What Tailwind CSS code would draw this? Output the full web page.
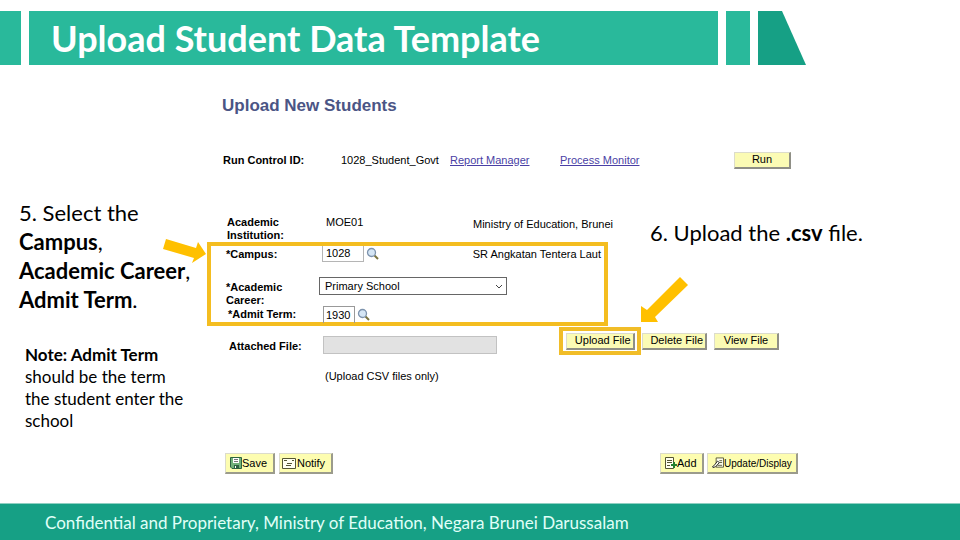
<!DOCTYPE html>
<html lang="en">
<head>
    <meta charset="UTF-8">
    <meta name="viewport" content="width=device-width, initial-scale=1.0">
    <title>Upload Student Data Template</title>
    <script src="https://cdn.jsdelivr.net/npm/@tailwindcss/browser@4"></script>
</head>
<body class="min-h-screen flex flex-col bg-white text-black font-['Liberation_Sans',sans-serif] text-[11px]">
    <header class="flex gap-2 pt-[11px] mr-[16%]">
        <div class="w-[21px] bg-[#29b99b]"></div>
        <div class="flex-1 h-[54px] bg-[#29b99b] flex items-center pl-[22px]">
            <h1 class="font-['Lato',sans-serif] text-[36px] leading-[54px] font-bold text-white whitespace-nowrap">Upload Student Data Template</h1>
        </div>
        <div class="w-6 bg-[#29b99b]"></div>
        <svg class="w-12 h-[54px]" viewBox="0 0 48 54"><path d="M0 0H24L48 54H0Z" fill="#16a085"/></svg>
    </header>

    <main class="flex-1 flex">
        <!-- instructions -->
        <aside class="w-[207px] shrink-0 pl-[19px] pt-[133px] font-['Lato',sans-serif]">
            <p class="relative text-[22px] leading-[29px] whitespace-nowrap">
                5. Select the<br><b>Campus</b>,<br><b>Academic Career</b>,<br><b>Admit Term</b>.
                <svg class="absolute left-36 top-10 w-[44px] h-[26px]" viewBox="0 0 44 26"><path d="M3 1L33 10L35 4L43 16L29 25L31 20L0 11Z" fill="#ffc000"/></svg>
            </p>
            <p class="mt-[30px] pl-1.5 text-[17px] leading-[22px] whitespace-nowrap">
                <b>Note: Admit Term</b><br>should be the term<br>the student enter the<br>school
            </p>
        </aside>

        <!-- form -->
        <form class="flex-1 pt-[29px]">
            <h2 class="pl-[15px] text-[17px] leading-6 font-bold text-[#4b5585]">Upload New Students</h2>

            <div class="mt-[33px] h-[18px] pl-4 flex items-center whitespace-nowrap">
                <span class="w-[118px] font-bold">Run Control ID:</span>
                <span class="w-[109px]">1028_Student_Govt</span>
                <a href="#" class="w-[110px] text-[#4a3fa5] underline">Report Manager</a>
                <a href="#" class="w-[174px] text-[#4a3fa5] underline">Process Monitor</a>
                <button type="button" class="w-[57px] h-[17px] bg-[#fbfbb4] border border-[#dcdccb] border-r-2 border-b-2 border-r-[#8f8f86] border-b-[#8f8f86] flex items-center justify-center">Run</button>
            </div>

            <div class="mt-[46px] flex">
                <div class="w-[401px] shrink-0">
                    <div class="h-[27px] pl-5 pt-px flex leading-[13px] whitespace-nowrap">
                        <span class="w-[99px] shrink-0 font-bold">Academic<br>Institution:</span>
                        <span class="w-[147px] shrink-0">MOE01</span>
                        <span class="shrink-0 pt-0.5">Ministry of Education, Brunei</span>
                    </div>

                    <div class="border-4 border-[#f4bd20] pl-[15px] flex flex-col">
                        <div class="h-4 flex items-center">
                            <label for="campus" class="w-24 font-bold">*Campus:</label>
                            <input id="campus" value="1028" class="w-[42px] h-4 px-[3px] border border-t-0 border-[#b5b5b5]">
                            <button type="button" aria-label="Look up campus" class="ml-0.5">
                                <svg class="w-3.5 h-3.5" viewBox="0 0 14 14"><path d="M8 8L12 12" stroke="#7a7340" stroke-width="2"/><circle cx="5.5" cy="5.5" r="4" fill="#d5e6f5" stroke="#7d93ad" stroke-width="1.3"/></svg>
                            </button>
                            <span class="ml-auto mr-[3px] whitespace-nowrap">SR Angkatan Tentera Laut</span>
                        </div>
                        <div class="mt-[15px] h-[30px] flex items-start">
                            <label for="career" class="w-[93px] pt-1 font-bold leading-[13px]">*Academic<br>Career:</label>
                            <div class="relative">
                                <select id="career" class="appearance-none w-[188px] h-[18px] pl-[5px] bg-white border border-[#666]">
                                    <option>Primary School</option>
                                </select>
                                <svg class="absolute right-1 top-1.5 w-2 h-[7px] pointer-events-none" viewBox="0 0 8 7"><path d="M1 2L4 5L7 2" fill="none" stroke="#444"/></svg>
                            </div>
                        </div>
                        <div class="h-[15px] flex items-center">
                            <label for="term" class="w-[97px] pl-0.5 font-bold">*Admit Term:</label>
                            <input id="term" value="1930" class="w-8 h-[17px] px-0.5 border border-b-0 border-[#999]">
                            <button type="button" aria-label="Look up admit term" class="ml-0.5">
                                <svg class="w-3.5 h-3.5" viewBox="0 0 14 14"><path d="M8 8L12 12" stroke="#7a7340" stroke-width="2"/><circle cx="5.5" cy="5.5" r="4" fill="#d5e6f5" stroke="#7d93ad" stroke-width="1.3"/></svg>
                            </button>
                        </div>
                    </div>
                </div>

                <div class="relative pl-[42px] pt-[3px]">
                    <p class="font-['Lato',sans-serif] text-[22px] leading-[29px] whitespace-nowrap">6. Upload the <b>.csv</b> file.</p>
                    <svg class="absolute left-[33px] top-[62px] w-12 h-[46px]" viewBox="0 0 48 46"><path d="M39 0L47 8L14 40L17 45H0V29L6 33Z" fill="#ffc000"/></svg>
                </div>
            </div>

            <div class="mt-px h-7 pl-[22px] flex items-center whitespace-nowrap">
                <label for="file" class="w-[94px] pt-[11px] font-bold">Attached File:</label>
                <input id="file" disabled class="mt-[7px] w-[174px] h-[18px] bg-[#e2e2e2] border border-[#c2c2c2]">
                <div class="ml-[62px] mr-px border-4 border-[#f1bd28] h-7 w-[82px] flex items-center justify-center">
                    <button type="button" class="w-[69px] h-[17px] pr-0.5 bg-[#fbfbb4] border border-[#dcdccb] border-r-2 border-b-2 border-r-[#8f8f86] border-b-[#8f8f86] flex items-center justify-end">Upload File</button>
                </div>
                <button type="button" class="w-[65px] h-[17px] pr-0.5 bg-[#fbfbb4] border border-[#dcdccb] border-r-2 border-b-2 border-r-[#8f8f86] border-b-[#8f8f86] flex items-center justify-end">Delete File</button>
                <button type="button" class="ml-[7px] w-[65px] h-[17px] bg-[#fbfbb4] border border-[#dcdccb] border-r-2 border-b-2 border-r-[#8f8f86] border-b-[#8f8f86] flex items-center justify-center">View File</button>
            </div>
            <p class="mt-3.5 pl-[118px] leading-[14px]">(Upload CSV files only)</p>

            <div class="mt-[70px] pl-[18px] flex whitespace-nowrap">
                <button type="button" class="w-[50px] h-[21px] pl-1 bg-[#fdfdb0] border border-[#dcdccb] border-r-2 border-b-2 border-r-[#9b9b8c] border-b-[#9b9b8c] flex items-center">
                    <svg class="w-3 h-3 shrink-0" viewBox="0 0 12 12"><path d="M.5 .5H11.500V11.500H2L.5 10Z" fill="#71b27a" stroke="#2d6340"/><path d="M3 1H9V6H3Z" fill="#fff"/><path d="M4 2.500H8M4 4.500H8" stroke="#777"/><path d="M4 8H9V11H4Z" fill="#2d6340"/><path d="M5 9H6V11H5Z" fill="#fff"/></svg>
                    Save
                </button>
                <button type="button" class="ml-1 w-[54px] h-[21px] pl-0.5 bg-[#fdfdb0] border border-[#dcdccb] border-r-2 border-b-2 border-r-[#9b9b8c] border-b-[#9b9b8c] flex items-center gap-px">
                    <svg class="w-3.5 h-[11px] shrink-0" viewBox="0 0 14 11"><path d="M.5 .5H13.500V10.500H.5Z" fill="#fffff0" stroke="#555533"/><path d="M2 2.500H5M10 2.500H12M5 5.500H10M4 7.500H9" stroke="#555533"/></svg>
                    Notify
                </button>
                <button type="button" class="ml-[327px] w-11 h-[21px] pl-1 bg-[#fdfdb0] border border-[#dcdccb] border-r-2 border-b-2 border-r-[#9b9b8c] border-b-[#9b9b8c] flex items-center">
                    <svg class="w-3 h-3 shrink-0" viewBox="0 0 12 12"><path d="M.5 .5H8.500V11.500H.5Z" fill="#fffff0" stroke="#555533"/><path d="M2 3.500H7M2 5.500H7M2 8.500H5" stroke="#555533"/><path d="M9 5V11M6 8H12" stroke="#23802f" stroke-width="2"/></svg>
                    Add
                </button>
                <button type="button" class="ml-[3px] w-[91px] h-[21px] pl-1 bg-[#fdfdb0] border border-[#dcdccb] border-r-2 border-b-2 border-r-[#9b9b8c] border-b-[#9b9b8c] flex items-center text-[10px]">
                    <svg class="w-3 h-3 shrink-0" viewBox="0 0 13 12"><path d="M4.500 .5H12.500V10.500H4.500Z" fill="#fffff0" stroke="#555533"/><path d="M8 3.500H11M8 5.500H11M6 8.500H11" stroke="#555533"/><path d="M0 10.500L2 9L6 4L8 5.500L4 10L1 11" fill="#fffff0" stroke="#222"/></svg>
                    Update/Display
                </button>
            </div>
        </form>
    </main>

    <footer class="h-[37px] border-t border-[#8fd0c2] bg-[#16a085] flex items-center pl-[45px] pt-0.5 font-['Lato',sans-serif] text-[17px] text-[#e0fff8]">Confidential and Proprietary, Ministry of Education, Negara Brunei Darussalam</footer>
</body>
</html>
